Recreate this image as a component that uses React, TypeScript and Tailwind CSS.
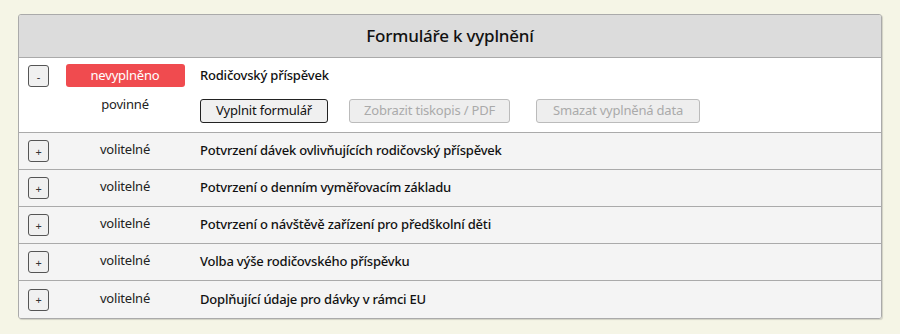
import React from 'react';

const optional = [
  'Potvrzení dávek ovlivňujících rodičovský příspěvek',
  'Potvrzení o denním vyměřovacím základu',
  'Potvrzení o návštěvě zařízení pro předškolní děti',
  'Volba výše rodičovského příspěvku',
  'Doplňující údaje pro dávky v rámci EU',
];

const Toggle: React.FC<{ sign: string }> = ({ sign }) => (
  <button className="w-[21px] h-[22px] rounded-[3px] border border-[#555] bg-[#f0f0f0] text-[11px] leading-none text-[#333] flex items-center justify-center">
    {sign}
  </button>
);

export default function App() {
  return (
    <div className="min-h-[334px] bg-[#f5f5e6] pt-[14px] px-[18px] font-['Noto_Sans',sans-serif] text-[#111] tracking-[-0.2px]">
      <div className="border border-[#aaa] rounded-[3px] shadow-[1px_1px_1px_rgba(0,0,0,0.15)] overflow-hidden">
        <div className="h-[43px] bg-[#dcdcdc] border-b border-[#aaa] flex items-center justify-center text-[17px] font-medium">
          Formuláře k vyplnění
        </div>

        <div className="bg-white border-b border-[#aaa] h-[75px] flex pt-[6px] px-[9px]">
          <div className="pt-[1px]">
            <Toggle sign="-" />
          </div>
          <div className="w-[120px] ml-[16px] flex flex-col items-center">
            <div className="w-[119px] h-[23px] rounded-[3px] bg-[#f04b4f] text-white text-[13px] flex items-center justify-center">
              nevyplněno
            </div>
            <div className="mt-[8px] text-[13px] text-[#222]">povinné</div>
          </div>
          <div className="ml-[15px] flex flex-col">
            <div className="h-[23px] flex items-center text-[13px] font-medium">Rodičovský příspěvek</div>
            <div className="mt-[12px] flex gap-[20px] text-[13px]">
              <button className="w-[128px] h-[24px] rounded-[3px] border border-[#222] bg-[#f0f0f0] text-[#111]">Vyplnit formulář</button>
              <button className="w-[161px] h-[24px] rounded-[3px] border border-[#bbb] bg-[#eeeeee] text-[#aaa] ml-[1px]">Zobrazit tiskopis / PDF</button>
              <button className="w-[164px] h-[24px] rounded-[3px] border border-[#bbb] bg-[#eeeeee] text-[#aaa] ml-[6px]">Smazat vyplněná data</button>
            </div>
          </div>
        </div>

        {optional.map((title, i) => (
          <div
            key={title}
            className={`bg-[#f4f4f4] h-[37px] flex items-center px-[9px] ${i < optional.length - 1 ? 'border-b border-[#aaa]' : ''}`}
          >
            <Toggle sign="+" />
            <div className="w-[120px] ml-[16px] text-center text-[13px] text-[#222] -mt-[2px]">volitelné</div>
            <div className="ml-[15px] text-[13px] font-medium">{title}</div>
          </div>
        ))}
      </div>
    </div>
  );
}
